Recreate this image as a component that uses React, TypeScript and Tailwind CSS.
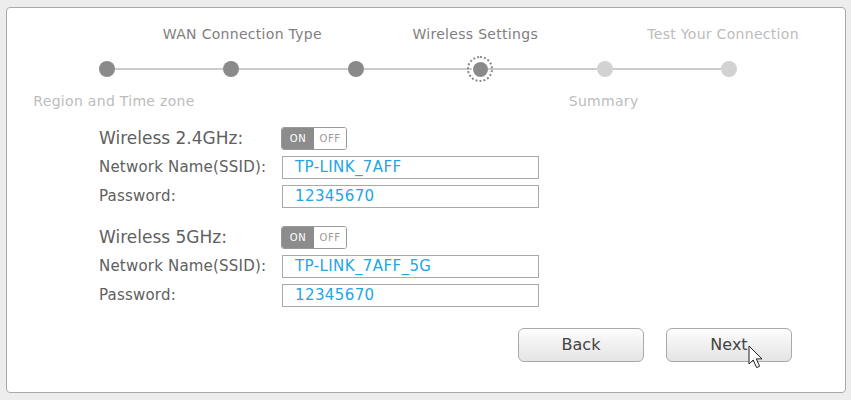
import React from 'react'

interface Step {
  label: string
  pos: 'top' | 'bottom'
  state: 'done' | 'current' | 'todo'
  labelColor: string
  shift: string
}

const steps: Step[] = [
  { label: 'Region and Time zone', pos: 'bottom', state: 'done', labelColor: 'text-[#bcbcbc]', shift: 'translate-x-[7px]' },
  { label: 'WAN Connection Type', pos: 'top', state: 'done', labelColor: 'text-[#808080]', shift: 'translate-x-[11px]' },
  { label: '', pos: 'bottom', state: 'done', labelColor: 'text-[#bcbcbc]', shift: '' },
  { label: 'Wireless Settings', pos: 'top', state: 'current', labelColor: 'text-[#808080]', shift: '-translate-x-[5px]' },
  { label: 'Summary', pos: 'bottom', state: 'todo', labelColor: 'text-[#bcbcbc]', shift: '-translate-x-[1px]' },
  { label: 'Test Your Connection', pos: 'top', state: 'todo', labelColor: 'text-[#bcbcbc]', shift: '-translate-x-[6px]' },
]

export default function App() {
  return (
    <div
      className="min-h-[400px] w-[851px] bg-[#ededed] pt-[7px] pl-[6px]"
      style={{ fontFamily: '"DejaVu Sans", Verdana, sans-serif' }}
    >
      <div className="relative h-[386px] w-[840px] rounded-[4px] border border-[#a9a9a9] bg-white pt-[16px] pl-[92px]">
        <Stepper />

        <div className="mt-[16px] flex flex-col">
          <BandSection title="Wireless 2.4GHz:" ssid="TP-LINK_7AFF" password="12345670" />
          <div className="h-[18px]" />
          <BandSection title="Wireless 5GHz:" ssid="TP-LINK_7AFF_5G" password="12345670" />
        </div>

        <div className="mt-[21px] flex justify-end gap-[22px] pr-[53px]">
          <Button label="Back" />
          <div className="relative">
            <Button label="Next" />
            {/* mouse pointer */}
            <svg
              className="absolute left-[82px] top-[17px]"
              width="17"
              height="24"
              viewBox="0 0 17 24"
            >
              <path
                d="M1 1 L1 19 L5.2 15 L8.6 22.6 L11.6 21.3 L8.3 13.9 L14 13.9 Z"
                fill="#fff"
                stroke="#222"
                strokeWidth="1"
                strokeLinejoin="miter"
              />
            </svg>
          </div>
        </div>
      </div>
    </div>
  )
}

function Stepper() {
  return (
    <div className="flex w-[638px] items-start">
      {steps.map((step, i) => (
        <React.Fragment key={i}>
          {i > 0 && <div className="mt-[44px] h-[2px] flex-1 bg-[#cccccc]" />}
          <div className="flex w-4 flex-col items-center">
            <div
              className={`h-[20px] whitespace-nowrap text-[14px] leading-[20px] tracking-[0.3px] ${step.labelColor} ${step.shift}`}
            >
              {step.pos === 'top' ? step.label : ''}
            </div>
            <div className="mt-[17px] flex h-4 w-4 items-center justify-center">
              <Dot state={step.state} />
            </div>
            <div
              className={`mt-[14px] h-[20px] whitespace-nowrap text-[14px] leading-[20px] tracking-[0.3px] ${step.labelColor} ${step.shift}`}
            >
              {step.pos === 'bottom' ? step.label : ''}
            </div>
          </div>
        </React.Fragment>
      ))}
    </div>
  )
}

function Dot({ state }: { state: 'done' | 'current' | 'todo' }) {
  if (state === 'current') {
    return (
      <div className="relative flex h-4 w-4 items-center justify-center">
        <div className="absolute h-[26px] w-[26px] rounded-full border-[2px] border-dotted border-[#8a8a8a]" />
        <div className="h-[15px] w-[15px] rounded-full bg-[#8a8a8a]" />
      </div>
    )
  }
  return (
    <div
      className={`h-4 w-4 rounded-full ${state === 'done' ? 'bg-[#8a8a8a]' : 'bg-[#d2d2d2]'}`}
    />
  )
}

function BandSection({ title, ssid, password }: { title: string; ssid: string; password: string }) {
  return (
    <div className="flex flex-col gap-[6px]">
      <div className="flex h-[23px] items-center">
        <div className="w-[182px] text-[17px] text-[#606060]">{title}</div>
        <Toggle />
      </div>
      <Field label="Network Name(SSID):" value={ssid} />
      <Field label="Password:" value={password} />
    </div>
  )
}

function Toggle() {
  return (
    <div className="flex h-[23px] w-[66px] overflow-hidden rounded-[3px] border border-[#9a9a9a] text-[10px] leading-none">
      <div className="flex w-[32px] items-center justify-center bg-[#8c8c8c] tracking-[0.5px] text-white">
        ON
      </div>
      <div className="flex flex-1 items-center justify-center bg-white tracking-[0.5px] text-[#9a9a9a]">
        OFF
      </div>
    </div>
  )
}

function Field({ label, value }: { label: string; value: string }) {
  return (
    <div className="flex h-[23px] items-center">
      <div className="w-[183px] text-[15px] tracking-[0.2px] text-[#606060]">{label}</div>
      <div className="flex h-[23px] w-[257px] items-center border border-[#a9a9a9] pl-[12px] text-[15px] tracking-[0.4px] text-[#22a6e6]">
        {value}
      </div>
    </div>
  )
}

function Button({ label }: { label: string }) {
  return (
    <div className="flex h-[34px] w-[126px] items-center justify-center rounded-[6px] border border-[#a9a9a9] bg-gradient-to-b from-[#fdfdfd] to-[#e4e4e4] text-[16px] text-[#444]">
      {label}
    </div>
  )
}
